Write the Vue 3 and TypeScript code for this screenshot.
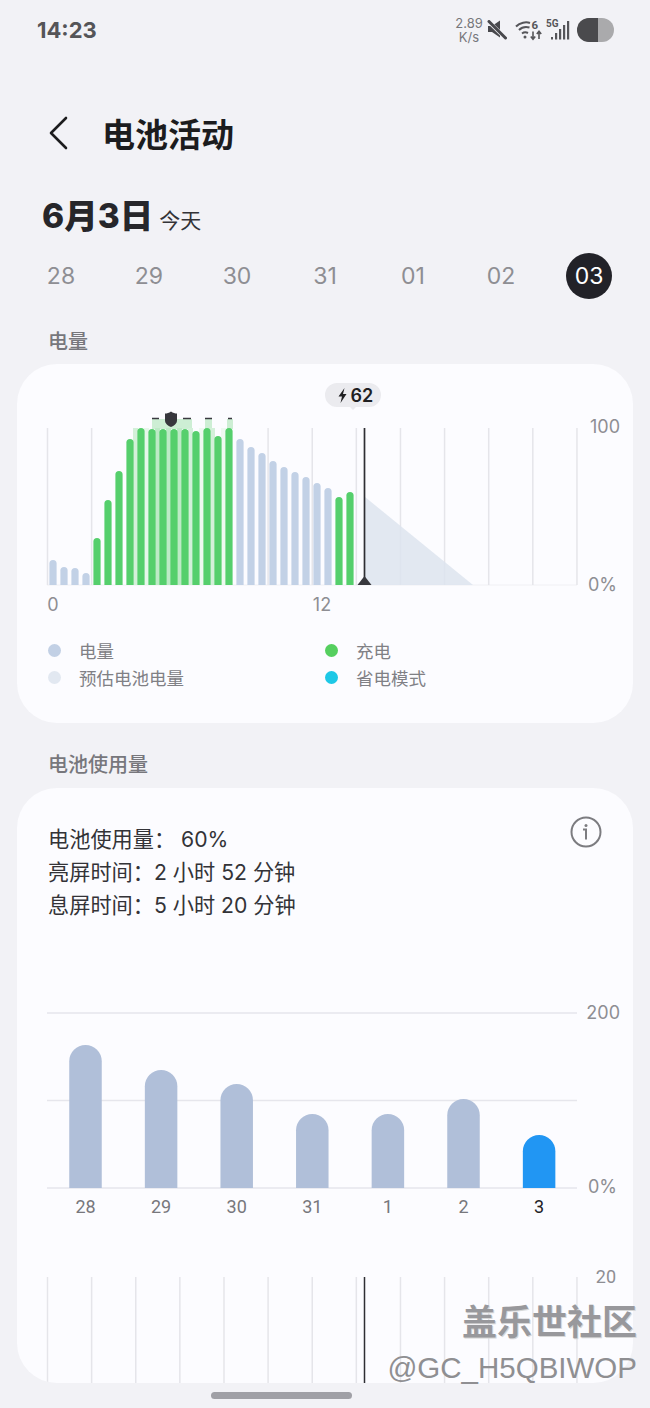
<script setup lang="ts">
const days = ['28', '29', '30', '31', '01', '02', '03']

const gridX = Array.from({ length: 13 }, (_, i) => 47.5 + i * 44.12)

// top of each hourly bar, read off the chart (baseline is y=585)
const hourlyTops = [560, 567, 568, 573, 538, 500, 471, 439, 428, 429, 429, 429, 429, 431, 428, 436, 428, 439, 447, 453, 461, 467, 472, 477, 483, 488, 497, 492]
const charging = (i: number) => (i >= 4 && i <= 16) || i >= 26

function barPath(cx: number, top: number, w: number, bottom: number) {
  const r = w / 2
  return `M${cx - r} ${bottom}V${top + r}A${r} ${r} 0 0 1 ${cx + r} ${top + r}V${bottom}Z`
}

const hourly = hourlyTops.map((top, i) => ({
  d: barPath(53 + i * 11, top, 7.2, 585),
  color: charging(i) ? '#55cf6c' : '#c2d1e6',
}))

// pale green between the bars while the phone was on the charger
const chargeGaps = [
  { x: 135.5, color: '#d3f0d9' },
  { x: 146.5, color: '#e6f7ea' },
  { x: 157.5, color: '#bdeac6' },
  { x: 168.5, color: '#bdeac6' },
  { x: 179.5, color: '#bdeac6' },
  { x: 190.5, color: '#d3f0d9' },
  { x: 201.5, color: '#eef9f0' },
  { x: 212.5, color: '#d3f0d9' },
  { x: 223.5, color: '#eef9f0' },
]

const daily = [
  { label: '28', top: 1045 },
  { label: '29', top: 1070 },
  { label: '30', top: 1084 },
  { label: '31', top: 1114 },
  { label: '1', top: 1114 },
  { label: '2', top: 1099 },
  { label: '3', top: 1135, today: true },
].map((b, i) => ({ ...b, x: 85.5 + i * 75.6, d: barPath(85.5 + i * 75.6, b.top, 32.5, 1188) }))

const legend = [
  { label: '电量', color: '#c2d0e5' },
  { label: '充电', color: '#55cf5f' },
  { label: '预估电池电量', color: '#e2e8f1' },
  { label: '省电模式', color: '#1ec8e6' },
]
</script>

<template>
  <div class="page">
    <div class="status">
      <span class="time">14:23</span>
      <div class="status-right">
        <div class="speed"><span>2.89</span><span>K/s</span></div>
        <svg class="ic-mute" width="20" height="20" viewBox="0 0 20 20">
          <path d="M1 6h4L13 .5v17L5 12H1z" fill="#48484c" />
          <path d="M1.500 1.500L19 18.500" stroke="#f2f2f6" stroke-width="4" />
          <path d="M2 1.500L18.500 18" stroke="#48484c" stroke-width="3" stroke-linecap="round" />
        </svg>
        <svg class="ic-wifi" width="27" height="22" viewBox="0 0 27 22">
          <path d="M1 7.500C5 3.500 11 2.500 15 4" stroke="#555559" stroke-width="2" fill="none" />
          <path d="M4 11C7 8 11 7.500 14.500 8.500" stroke="#555559" stroke-width="2" fill="none" />
          <path d="M7 14.500C9 13 11 13 13 14" stroke="#555559" stroke-width="2" fill="none" />
          <circle cx="10" cy="18" r="1.500" fill="#555559" />
          <text x="16.500" y="10" class="ic-text">6</text>
          <path d="M18 12.500v7.500M15.800 17.500l2.200 2.800 2.200-2.800M24 20v-7.500M21.800 15l2.200-2.800 2.200 2.800" stroke="#555559" stroke-width="1.600" fill="none" />
        </svg>
        <svg class="ic-signal" width="24" height="22" viewBox="0 0 24 22">
          <text x="0" y="8" class="ic-text small">5G</text>
          <rect x="5" y="18" width="2" height="2.500" fill="#555559" />
          <rect x="9" y="14" width="2.200" height="6.500" fill="#555559" />
          <rect x="13" y="10" width="2.200" height="10.500" fill="#555559" />
          <rect x="17" y="6" width="2.200" height="14.500" fill="#555559" />
          <rect x="21" y="2" width="2.200" height="18.500" fill="#555559" />
        </svg>
        <div class="battery"><div class="battery-level"></div></div>
      </div>
    </div>

    <div class="header">
      <svg width="22" height="34" viewBox="0 0 22 34" class="back">
        <path d="M18 2L3 17l15 15" fill="none" stroke="#1c1c1e" stroke-width="2.600" stroke-linecap="round" stroke-linejoin="round" />
      </svg>
      <span class="title">电池活动</span>
    </div>

    <div class="date-row">
      <span class="date">6月3日</span>
      <span class="today">今天</span>
    </div>

    <div class="days">
      <div v-for="(d, i) in days" :key="d" class="day" :class="{ active: i === days.length - 1 }">
        <span>{{ d }}</span>
      </div>
    </div>

    <div class="section first">电量</div>
    <div class="card card-level">
      <svg class="chart" width="616" height="260" viewBox="17 364 616 260">
        <line x1="47" x2="577" y1="585" y2="585" stroke="#f0f0f4" stroke-width="1" />
        <line v-for="x in gridX" :key="x" :x1="x" :x2="x" y1="428" y2="585" stroke="#e5e5ea" stroke-width="1.500" />
        <path d="M365 497L473 585H365Z" fill="#dde4ef" fill-opacity="0.85" />

        <rect x="152" y="419" width="40" height="10" fill="#cdeed4" />
        <rect x="205" y="419" width="7" height="10" fill="#cdeed4" />
        <rect x="227" y="419" width="6" height="10" fill="#cdeed4" />
        <rect v-for="g in chargeGaps" :key="g.x" :x="g.x - 2.500" y="428" width="5" height="157" :fill="g.color" />
        <path v-for="(b, i) in hourly" :key="i" :d="b.d" :fill="b.color" />

        <g stroke="#3a3a40" stroke-width="1.500">
          <line x1="152" x2="159" y1="418.500" y2="418.500" />
          <line x1="183" x2="191" y1="418.500" y2="418.500" />
          <line x1="205" x2="212" y1="418.500" y2="418.500" />
          <line x1="228" x2="232" y1="418.500" y2="418.500" />
        </g>
        <path d="M171 411.500c2 1.500 4 2 6 2v7c0 3-3 5.500-6 6.500-3-1-6-3.500-6-6.500v-7c2 0 4-.5 6-2z" fill="#37373d" />

        <line x1="364.500" x2="364.500" y1="428" y2="585" stroke="#2e2e33" stroke-width="1.700" />
        <path d="M364.500 576L371.500 585H357.500Z" fill="#38383e" />

        <path d="M337 383h32a12 12 0 0 1 0 24h-13l-3 3-3-3h-13a12 12 0 0 1 0-24z" fill="#ebebef" />
        <path d="M344.500 388l-6 8.500h3.500l-1.500 6.500 6-9h-3.500z" fill="#1f1f22" />
        <text x="350.500" y="401.500" class="tip">62</text>

        <text x="53" y="611" text-anchor="middle" class="axis">0</text>
        <text x="322" y="611" text-anchor="middle" class="axis">12</text>
        <text x="620" y="433" text-anchor="end" class="axis">100</text>
        <text x="617" y="591" text-anchor="end" class="axis">0%</text>
      </svg>
      <div class="legend">
        <div v-for="item in legend" :key="item.label" class="legend-item">
          <span class="dot" :style="{ background: item.color }"></span>
          <span>{{ item.label }}</span>
        </div>
      </div>
    </div>

    <div class="section second">电池使用量</div>
    <div class="card card-usage">
      <div class="usage-top">
        <div class="usage-text">
          <div>电池使用量： 60%</div>
          <div>亮屏时间：2 小时 52 分钟</div>
          <div>息屏时间：5 小时 20 分钟</div>
        </div>
        <svg class="info" width="32" height="32" viewBox="0 0 32 32">
          <circle cx="16" cy="16" r="14.500" fill="none" stroke="#7c7c80" stroke-width="2" />
          <circle cx="16" cy="9.500" r="1.500" fill="#7c7c80" />
          <path d="M13 13.500h3v10" fill="none" stroke="#7c7c80" stroke-width="2" />
        </svg>
      </div>

      <svg class="chart chart-daily" width="616" height="225" viewBox="17 1000 616 225">
        <line x1="47" x2="577" y1="1013" y2="1013" stroke="#e6e6ec" stroke-width="1.500" />
        <line x1="47" x2="577" y1="1100.500" y2="1100.500" stroke="#e6e6ec" stroke-width="1.500" />
        <line x1="47" x2="577" y1="1188" y2="1188" stroke="#e6e6ec" stroke-width="1.500" />
        <path v-for="b in daily" :key="b.label" :d="b.d" :fill="b.today ? '#2196f3' : '#b0bfd9'" />
        <text
          v-for="b in daily"
          :key="'l' + b.label"
          :x="b.x"
          y="1213"
          text-anchor="middle"
          class="day-label"
          :class="{ current: b.today }"
        >{{ b.label }}</text>
        <text x="620" y="1019" text-anchor="end" class="axis">200</text>
        <text x="617" y="1193" text-anchor="end" class="axis">0%</text>
      </svg>

      <svg class="chart chart-time" width="616" height="118" viewBox="17 1265 616 118">
        <line v-for="x in gridX" :key="x" :x1="x" :x2="x" y1="1277" y2="1383" stroke="#e5e5ea" stroke-width="1.500" />
        <line x1="364.500" x2="364.500" y1="1277" y2="1383" stroke="#2e2e33" stroke-width="1.500" />
        <text x="616" y="1283" text-anchor="end" class="axis narrow">20</text>
      </svg>
    </div>

    <div class="watermark">
      <div class="wm-title">盖乐世社区</div>
      <div class="wm-user">@GC_H5QBIWOP</div>
    </div>
    <div class="home-bar"></div>
  </div>
</template>

<style>
html,
body {
  margin: 0;
  background: #f2f2f6;
}
</style>

<style scoped>
.page {
  position: relative;
  width: 650px;
  height: 1408px;
  overflow: hidden;
  background: #f2f2f6;
  font-family: Inter, "Noto Sans CJK SC", sans-serif;
  color: #222226;
}

.status {
  display: flex;
  justify-content: space-between;
  align-items: center;
  height: 60px;
  padding: 0 36px 0 37px;
  box-sizing: border-box;
}

.time {
  font-size: 22px;
  font-weight: 700;
  color: #555558;
}

.status-right {
  display: flex;
  align-items: center;
}

.speed {
  display: flex;
  flex-direction: column;
  align-items: center;
  width: 28px;
  margin-left: 2px;
  font-size: 13px;
  line-height: 14px;
  color: #77777b;
}

.ic-mute {
  margin-left: 4px;
}

.ic-wifi {
  margin-left: 8px;
}

.ic-signal {
  margin-left: 4px;
}

.ic-text {
  font-family: Roboto, sans-serif;
  font-size: 11.500px;
  font-weight: 700;
  fill: #555559;
}

.ic-text.small {
  font-size: 10px;
}

.battery {
  width: 37px;
  height: 24px;
  margin-left: 7px;
  border-radius: 12px;
  background: #aaaaac;
  overflow: hidden;
}

.battery-level {
  width: 21px;
  height: 24px;
  background: #4a4a4d;
  border-radius: 10px 0 0 10px;
}

.header {
  display: flex;
  align-items: center;
  height: 60px;
  margin-top: 43px;
  padding-left: 48px;
}

.back {
  display: block;
}

.title {
  margin-left: 32px;
  font-size: 33px;
  font-weight: 700;
  line-height: 60px;
  color: #1c1c1e;
  transform: translateY(2px);
}

.date-row {
  display: flex;
  align-items: baseline;
  height: 52px;
  margin-top: 27px;
  padding-left: 42px;
}

.date {
  font-size: 33.500px;
  font-weight: 800;
  line-height: 52px;
  color: #26262a;
}

.today {
  margin-left: 6px;
  font-size: 21px;
  color: #333337;
}

.days {
  display: grid;
  grid-template-columns: repeat(7, 88px);
  height: 46px;
  margin-top: 11px;
  padding-left: 17px;
}

.day {
  display: flex;
  align-items: center;
  justify-content: center;
  font-size: 23px;
  color: #8e8e93;
}

.day.active span {
  display: flex;
  align-items: center;
  justify-content: center;
  width: 46px;
  height: 46px;
  border-radius: 50%;
  background: #222228;
  color: #fff;
}

.section {
  padding-left: 48px;
  font-size: 20px;
  font-weight: 500;
  line-height: 28px;
  color: #77777c;
}

.section.first {
  margin-top: 29px;
}

.section.second {
  margin-top: 28px;
}

.card {
  width: 616px;
  margin-left: 17px;
  border-radius: 40px;
  background: #fcfcff;
}

.card-level {
  height: 359px;
  margin-top: 8px;
}

.card-usage {
  height: 595px;
  margin-top: 9px;
  overflow: hidden;
}

.chart {
  display: block;
}

.axis {
  font-family: Inter, sans-serif;
  font-size: 18px;
  fill: #8e8e93;
}

.axis.narrow {
  font-family: Roboto, sans-serif;
}

.tip {
  font-family: Inter, sans-serif;
  font-size: 18px;
  font-weight: 600;
  fill: #1f1f22;
}

.day-label {
  font-family: Roboto, sans-serif;
  font-size: 18px;
  fill: #77777c;
}

.day-label.current {
  fill: #222226;
}

.legend {
  display: grid;
  grid-template-columns: 277px 1fr;
  grid-auto-rows: 27px;
  margin-top: 13px;
  padding-left: 31px;
}

.legend-item {
  display: flex;
  align-items: center;
  font-size: 17.500px;
  color: #808085;
}

.dot {
  width: 13px;
  height: 13px;
  margin-right: 18px;
  border-radius: 50%;
}

.usage-top {
  display: flex;
  justify-content: space-between;
  padding: 35px 32px 0 31px;
  height: 177px;
  box-sizing: border-box;
}

.usage-text {
  font-size: 21.200px;
  line-height: 33px;
  color: #333337;
}

.info {
  margin-top: -7px;
  margin-right: -1px;
}

.chart-daily {
  margin-top: 35px;
}

.chart-time {
  margin-top: 40px;
}

.watermark {
  position: absolute;
  right: 13px;
  top: 1301px;
  text-align: right;
  color: #98989c;
}

.wm-title {
  font-size: 35px;
  font-weight: 700;
  line-height: 42px;
  text-shadow: 1px 1px 0 #d8d8d8;
}

.wm-user {
  margin-top: 9px;
  font-family: "Liberation Sans", sans-serif;
  font-size: 29.500px;
  line-height: 32px;
  color: #8f8f92;
}

.home-bar {
  position: absolute;
  left: 211px;
  top: 1392px;
  width: 141px;
  height: 7px;
  border-radius: 4px;
  background: #a0a0a6;
}
</style>
